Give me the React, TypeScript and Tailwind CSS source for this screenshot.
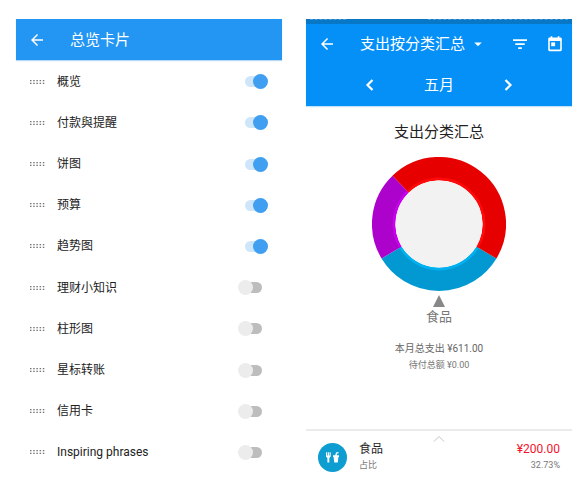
import React, { useState } from 'react';
import { MdArrowBack, MdArrowDropDown } from 'react-icons/md';

interface Card {
  id: string;
  label: string;
  enabled: boolean;
}

const initialCards: Card[] = [
  { id: 'overview', label: '概览', enabled: true },
  { id: 'payments', label: '付款與提醒', enabled: true },
  { id: 'pie', label: '饼图', enabled: true },
  { id: 'budget', label: '预算', enabled: true },
  { id: 'trend', label: '趋势图', enabled: true },
  { id: 'tips', label: '理财小知识', enabled: false },
  { id: 'bar', label: '柱形图', enabled: false },
  { id: 'starred', label: '星标转账', enabled: false },
  { id: 'credit', label: '信用卡', enabled: false },
  { id: 'phrases', label: 'Inspiring phrases', enabled: false },
];

// angles in degrees, clockwise from 3 o'clock
const segments = [
  { from: 31, to: 149, color: '#0299d2', inner: '#00b0f0' },
  { from: 149, to: 226, color: '#ad02cb', inner: '#c800ec' },
  { from: 226, to: 391, color: '#e60000', inner: '#ff0a0a' },
];

function arc(from: number, to: number, r: number) {
  const point = (deg: number) => {
    const a = (deg * Math.PI) / 180;
    return `${67 + r * Math.cos(a)} ${67 + r * Math.sin(a)}`;
  };
  return `M${point(from)} A${r} ${r} 0 ${to - from > 180 ? 1 : 0} 1 ${point(to)}`;
}

function Grip() {
  return (
    <svg className="h-1 w-[15px] shrink-0" viewBox="0 0 15 4" fill="#777" aria-hidden="true">
      {[0, 3.2, 6.4, 9.6, 12.8].map((x) => (
        <React.Fragment key={x}>
          <rect x={x} y="0" width="1.5" height="1.3" />
          <rect x={x} y="2.7" width="1.5" height="1.3" />
        </React.Fragment>
      ))}
    </svg>
  );
}

function Chevron({ d }: { d: string }) {
  return (
    <svg className="h-5 w-5" viewBox="0 0 20 20" fill="none" stroke="currentColor" strokeWidth="2.2" aria-hidden="true">
      <path d={d} />
    </svg>
  );
}

function FilterIcon() {
  return (
    <svg className="h-[18px] w-[18px]" viewBox="0 0 18 18" fill="currentColor" aria-hidden="true">
      <path d="M2 4.2h14v1.8H2zM4.3 8.2h9.4V10H4.3zM7.2 12.2h3.6V14H7.2z" />
    </svg>
  );
}

function CalendarIcon() {
  return (
    <svg className="h-[18px] w-[18px]" viewBox="0 0 18 18" fill="currentColor" fillRule="evenodd" aria-hidden="true">
      <path d="M3.6 2.6h1V1.2h1.7v1.4h5.4V1.2h1.7v1.4h1a1.4 1.4 0 0 1 1.4 1.4v10.8a1.4 1.4 0 0 1-1.4 1.4H3.6a1.4 1.4 0 0 1-1.4-1.4V4a1.4 1.4 0 0 1 1.4-1.4zM3.8 6v8.6h10.4V6z" />
      <path d="M5.2 7.4h3.9v3.8H5.2z" />
    </svg>
  );
}

function Donut() {
  return (
    <svg className="h-[134px] w-[134px]" viewBox="0 0 134 134" fill="none" role="img" aria-label="支出分类汇总">
      {segments.map((s) => (
        <React.Fragment key={s.color}>
          <path d={arc(s.from, s.to, 55.5)} stroke={s.color} strokeWidth="23" />
          <path d={arc(s.from, s.to, 45)} stroke={s.inner} strokeWidth="3" />
        </React.Fragment>
      ))}
      <circle cx="67" cy="67" r="43.6" fill="#f2f2f2" />
    </svg>
  );
}

function CardSettings() {
  const [cards, setCards] = useState(initialCards);

  const toggle = (id: string) => {
    setCards(cards.map((c) => (c.id === id ? { ...c, enabled: !c.enabled } : c)));
  };

  return (
    <section className="flex flex-col">
      <header className="flex h-[41px] items-center gap-6 bg-[#2395f3] pl-3 text-white shadow-[0_1px_1px_#b5d8f5]">
        <button type="button" aria-label="返回">
          <MdArrowBack className="h-[18px] w-[18px]" />
        </button>
        <h1 className="text-[15px] leading-5">总览卡片</h1>
      </header>
      <ul className="flex flex-1 flex-col pt-px">
        {cards.map((card) => (
          <li key={card.id} className="flex flex-1 items-center px-3.5">
            <Grip />
            <label htmlFor={card.id} className="ml-3 flex-1 text-xs text-[#222]">
              {card.label}
            </label>
            <input
              id={card.id}
              type="checkbox"
              role="switch"
              checked={card.enabled}
              onChange={() => toggle(card.id)}
              className="relative h-[15px] w-[30px] appearance-none before:absolute before:top-[2px] before:left-[7px] before:h-[11px] before:w-[17px] before:rounded-full before:bg-[#bdbdbd] after:absolute after:top-0 after:left-0 after:h-[15px] after:w-[15px] after:rounded-full after:bg-[#ececec] checked:before:bg-[#cfe6fa] checked:after:left-[15px] checked:after:bg-[#409ff0]"
            />
          </li>
        ))}
      </ul>
    </section>
  );
}

function CategoryReport() {
  return (
    <section className="flex flex-col">
      <header className="bg-[#0590f8] text-white shadow-[0_1px_1px_#c5e2f8]">
        <div className="flex h-[5px] justify-between bg-[#0877c6] px-1">
          <div className="w-9 border-t border-dashed border-[#4a9bd4]" />
          <div className="w-[140px] border-t border-dashed border-[#4a9bd4]" />
        </div>
        <div className="flex h-10 items-center pr-2 pl-3">
          <button type="button" aria-label="返回">
            <MdArrowBack className="h-[18px] w-[18px]" />
          </button>
          <button type="button" className="ml-6 flex items-center gap-1 text-[15px] leading-5 whitespace-nowrap">
            支出按分类汇总
            <MdArrowDropDown className="h-[18px] w-[18px]" />
          </button>
          <button type="button" aria-label="筛选" className="ml-auto">
            <FilterIcon />
          </button>
          <button type="button" aria-label="日期" className="ml-[17px]">
            <CalendarIcon />
          </button>
        </div>
        <div className="flex h-[42px] items-center justify-center gap-11">
          <button type="button" aria-label="上个月">
            <Chevron d="M12.5 5 7.5 10l5 5" />
          </button>
          <span className="text-[15px] leading-5">五月</span>
          <button type="button" aria-label="下个月">
            <Chevron d="m7.5 5 5 5-5 5" />
          </button>
        </div>
      </header>

      <div className="flex flex-1 flex-col items-center pt-4">
        <h2 className="text-[15px] leading-5 text-[#222]">支出分类汇总</h2>
        <div className="pt-[15px]">
          <Donut />
        </div>
        <svg className="mt-1 h-3 w-3" viewBox="0 0 12 12" fill="#888" aria-hidden="true">
          <path d="M6 0 12 12H0z" />
        </svg>
        <p className="text-[13px] leading-5 text-[#777]">食品</p>
        <p className="mt-3 text-[10px] leading-5 text-[#666]">本月总支出 ¥611.00</p>
        <p className="text-[9px] leading-3 text-[#777]">待付总额 ¥0.00</p>
      </div>

      <footer className="relative flex items-center border-t-2 border-[#ebebeb] px-3 pt-2.5">
        <svg className="absolute top-1 left-1/2 h-2 w-3 -translate-x-1/2" viewBox="0 0 12 8" fill="none" stroke="#c4c4c4" aria-hidden="true">
          <path d="M1 6.5 6 1.5l5 5" />
        </svg>
        <svg className="h-[29px] w-[29px]" viewBox="0 0 29 29" aria-hidden="true">
          <circle cx="14.5" cy="14.5" r="14.5" fill="#0d9dd0" />
          <g fill="#fff">
            <path d="M8 9.3h1.1v3.2h.7V9.3h1.1v3.2h.7V9.3h1.1v4.2l-1.4 1.6v4.4H9.4v-4.4L8 13.5z" />
            <path d="M17.2 12.2 18 9.6l2.4-.5.3 1.1-1.6.4-.4 1.6h2.3v1.9h-.6l-.6 5.4h-3.6l-.6-5.4H15v-1.9z" />
          </g>
        </svg>
        <div className="ml-3 flex-1">
          <p className="text-xs text-[#222]">食品</p>
          <p className="text-[9px] leading-4 text-[#777]">占比</p>
        </div>
        <div className="text-right">
          <p className="text-xs text-[#f5142c]">¥200.00</p>
          <p className="text-[9px] leading-4 text-[#777]">32.73%</p>
        </div>
      </footer>
    </section>
  );
}

export default function App() {
  return (
    <main className="grid min-h-screen grid-cols-2 gap-6 bg-white pt-[19px] pr-[13px] pb-[27px] pl-4 font-[Roboto,'Noto_Sans_CJK_SC',sans-serif]">
      <CardSettings />
      <CategoryReport />
    </main>
  );
}
